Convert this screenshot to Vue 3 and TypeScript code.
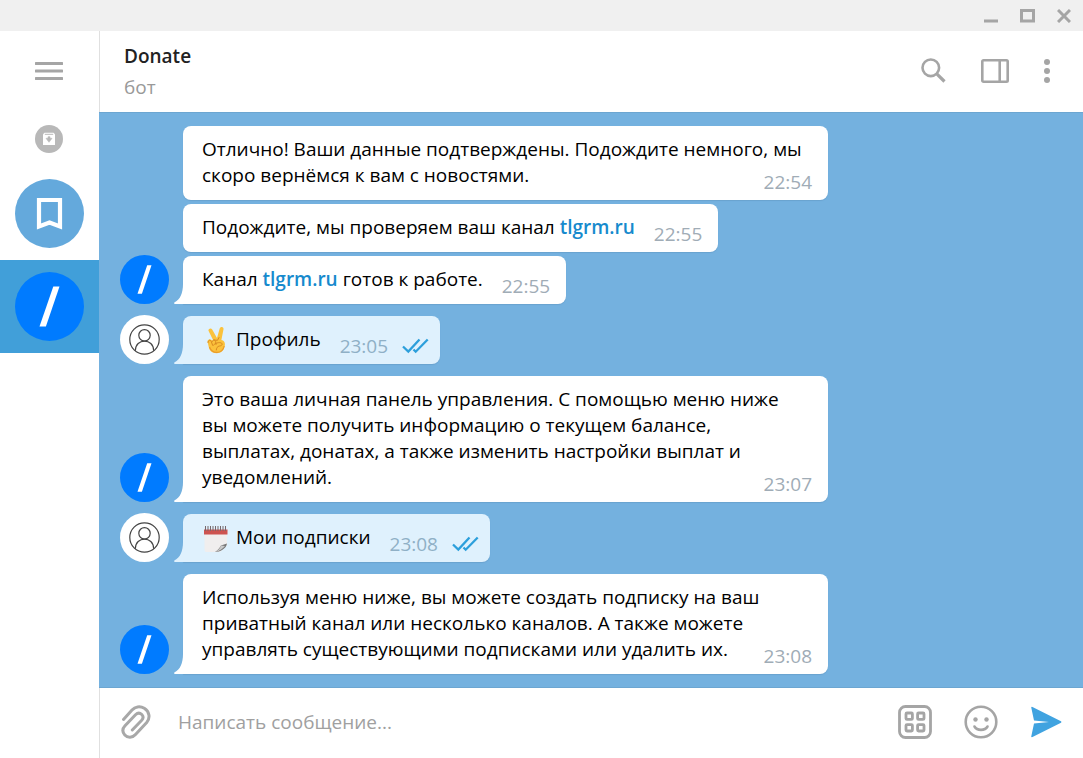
<script setup lang="ts">
import { ref } from 'vue'

type Icon = 'peace' | 'calendar'

interface Part {
  text: string
  link?: boolean
}

interface Message {
  id: number
  from: 'bot' | 'me'
  time: string
  parts: Part[]
  icon?: Icon
  last: boolean
}

const messages: Message[] = [
  {
    id: 1,
    from: 'bot',
    time: '22:54',
    last: false,
    parts: [{ text: 'Отлично! Ваши данные подтверждены. Подождите немного, мы скоро вернёмся к вам с новостями.' }],
  },
  {
    id: 2,
    from: 'bot',
    time: '22:55',
    last: false,
    parts: [{ text: 'Подождите, мы проверяем ваш канал ' }, { text: 'tlgrm.ru', link: true }],
  },
  {
    id: 3,
    from: 'bot',
    time: '22:55',
    last: true,
    parts: [{ text: 'Канал ' }, { text: 'tlgrm.ru', link: true }, { text: ' готов к работе.' }],
  },
  { id: 4, from: 'me', time: '23:05', last: true, icon: 'peace', parts: [{ text: 'Профиль' }] },
  {
    id: 5,
    from: 'bot',
    time: '23:07',
    last: true,
    parts: [
      {
        text: 'Это ваша личная панель управления. С помощью меню ниже вы можете получить информацию о текущем балансе, выплатах, донатах, а также изменить настройки выплат и уведомлений.',
      },
    ],
  },
  { id: 6, from: 'me', time: '23:08', last: true, icon: 'calendar', parts: [{ text: 'Мои подписки' }] },
  {
    id: 7,
    from: 'bot',
    time: '23:08',
    last: true,
    parts: [
      {
        text: 'Используя меню ниже, вы можете создать подписку на ваш приватный канал или несколько каналов. А также можете управлять существующими подписками или удалить их.',
      },
    ],
  },
]

const draft = ref('')
</script>

<template>
  <div class="window">
    <div class="titlebar">
      <button type="button" aria-label="Свернуть">
        <svg width="14" height="14" viewBox="0 0 14 14"><path d="M0 12H14" stroke="#a5a5a5" stroke-width="3" /></svg>
      </button>
      <button type="button" aria-label="Развернуть">
        <svg width="15" height="14" viewBox="0 0 15 14"><rect x="1.5" y="1.5" width="12" height="10.500" fill="none" stroke="#a5a5a5" stroke-width="3" /></svg>
      </button>
      <button type="button" aria-label="Закрыть">
        <svg width="14" height="14" viewBox="0 0 14 14"><path d="M1 1L13 13M13 1L1 13" stroke="#a5a5a5" stroke-width="3" /></svg>
      </button>
    </div>

    <div class="body">
      <nav class="sidebar">
        <button type="button" class="menu" aria-label="Меню">
          <svg width="28" height="18" viewBox="0 0 28 18"><path d="M1 1.500H27M1 9H27M1 16.500H27" stroke="#a5a5a5" stroke-width="3" stroke-linecap="round" /></svg>
        </button>
        <button type="button" class="archive" aria-label="Архив">
          <svg width="28" height="28" viewBox="0 0 28 28">
            <circle cx="14" cy="14" r="14" fill="#b8b8b8" />
            <path d="M9.500 7.800H18.500L20 9.300V20H8V9.300Z" fill="#fff" />
            <path d="M9.800 9.300H18.200" stroke="#b8b8b8" stroke-width="1" />
            <path d="M13 11.700H15V13.300H17L14 17.300L11 13.300H13Z" fill="#b8b8b8" stroke="#b8b8b8" stroke-width=".6" />
          </svg>
        </button>
        <button type="button" class="dialog" aria-label="Избранное">
          <svg width="69" height="69" viewBox="0 0 69 69">
            <circle cx="34.500" cy="34.500" r="34.500" fill="#64a9dc" />
            <path d="M24 21H45V47.500L34.500 43.500L24 47.500Z" fill="none" stroke="#fff" stroke-width="4.200" />
          </svg>
        </button>
        <button type="button" class="dialog active" aria-label="Donate">
          <svg width="69" height="69" viewBox="0 0 69 69">
            <circle cx="34.500" cy="34.500" r="34.500" fill="#007bff" />
            <path d="M38.300 14.500H44.500L30.900 54.500H24.500Z" fill="#fff" />
          </svg>
        </button>
      </nav>

      <main class="chat">
        <header class="header">
          <div class="who">
            <h1>Donate</h1>
            <p>бот</p>
          </div>
          <div class="actions">
            <button type="button" aria-label="Поиск">
              <svg width="25" height="25" viewBox="0 0 25 25" fill="none" stroke="#a5a5a5">
                <circle cx="9.800" cy="9.800" r="8.300" stroke-width="2.600" />
                <path d="M15.800 15.800L23.500 23.500" stroke-width="3.200" />
              </svg>
            </button>
            <button type="button" aria-label="Боковая панель">
              <svg width="28" height="24" viewBox="0 0 28 24" fill="none" stroke="#a5a5a5" stroke-width="2.600">
                <rect x="1.300" y="1.300" width="25.400" height="21.400" rx="1.200" />
                <path d="M18.700 1V23" />
              </svg>
            </button>
            <button type="button" aria-label="Ещё">
              <svg width="6" height="24" viewBox="0 0 6 24" fill="#a5a5a5">
                <circle cx="3" cy="3" r="3" /><circle cx="3" cy="12" r="3" /><circle cx="3" cy="21" r="3" />
              </svg>
            </button>
          </div>
        </header>

        <section class="history">
          <article v-for="m in messages" :key="m.id" class="row" :class="[m.from, { last: m.last }]">
            <div class="avatar">
              <svg v-if="m.last && m.from === 'bot'" width="49" height="49" viewBox="0 0 49 49">
                <circle cx="24.500" cy="24.500" r="24.500" fill="#007bff" />
                <path d="M27.200 10.300H31.500L21.900 38.700H17.500Z" fill="#fff" />
              </svg>
              <svg v-else-if="m.last" width="49" height="49" viewBox="0 0 49 49">
                <circle cx="24.500" cy="24.500" r="24.500" fill="#fff" />
                <g fill="none" stroke="#444" stroke-width="1.200">
                  <circle cx="24.500" cy="24.500" r="14.700" />
                  <circle cx="24.500" cy="20.300" r="5.700" />
                  <path d="M15.300 35.800C15.300 22.800 33.700 22.800 33.700 35.800" />
                </g>
              </svg>
            </div>
            <div class="bubble">
              <svg v-if="m.last" class="tail" width="10" height="20" viewBox="0 0 10 20"><path d="M10 0H9C9 9 6 16 0.300 18.500Q-0.300 20 1 20H10Z" fill="currentColor" /></svg>
              <p>
                <svg v-if="m.icon === 'peace'" class="emoji" width="26" height="28" viewBox="-3 1 26 28">
                  <path d="M8.300 14.500L3.600 5.100C2.700 2.800 6 1.300 7.200 3.500L12 12L14.700 2.500C15.400 0 19 .8 18.500 3.300L16.400 14C19.600 14.700 20.500 17 19.600 20.500C18.600 25 15.700 27.300 11.500 27.200C7 27.100 4.500 25 3.700 20.800L2.600 16C2.200 13.500 5 12.300 6.500 14Z" fill="#fbc23c" />
                  <path d="M3 16.500C3 14 5.500 13.500 6.300 15.500L7.500 19M7.200 15.500C8 13.200 10.300 13.700 10.600 15.500L11 18.500M8 19.500C10 17 14.500 15.800 16.600 17.200C18 18.300 16.700 19.800 14.500 20C12.300 20.300 11.400 22 11.300 24M9 14L12.500 14.300L14 11.500" fill="none" stroke="#d98a22" stroke-width="1" stroke-linecap="round" />
                  <path d="M4.500 21C6 25 9 26.500 12 26.400C16 26.200 18.500 23.500 19.200 20" fill="none" stroke="#e99b2c" stroke-width="1.200" />
                </svg>
                <svg v-else-if="m.icon === 'calendar'" class="emoji" width="26" height="28" viewBox="0 0 26 28">
                  <path d="M2.500 7H25V20.500L18 27H4Q2.500 27 2.500 25Z" fill="#f0eeee" />
                  <path d="M2 4.500H25.500V9.500H2Z" fill="#cd5350" />
                  <path d="M3.500 1V6M6 1V6M8.500 1V6M11 1V6M13.500 1V6M16 1V6M18.500 1V6M21 1V6M23.500 1V6" stroke="#77686b" stroke-width="1" />
                  <path d="M25 18.500C23 19.500 21 19.500 19 20.500C18 22.500 16 25 13 27C18 27 24 24 25 18.500Z" fill="#777" />
                  <path d="M19 20.500C18.500 23 16 25.500 13 27C18 26 21 23.500 23 21Z" fill="#c9c9c9" />
                </svg><template v-for="(part, i) in m.parts" :key="i"><a v-if="part.link" href="#">{{ part.text }}</a><template v-else>{{ part.text }}</template></template><span class="meta"><time>{{ m.time }}</time><svg v-if="m.from === 'me'" width="27" height="16" viewBox="0 0 27 16" fill="none" stroke="#2c9fdb" stroke-width="2.300"><path d="M1 8.500L6.300 13.500L17.500 1.500M11.500 11.500L13.700 13.700L25.700 1.500" /></svg></span>
              </p>
            </div>
          </article>
        </section>

        <form class="composer" @submit.prevent>
          <button type="button" aria-label="Прикрепить файл">
            <svg width="30" height="34" viewBox="0 0 30 34" fill="none" stroke="#a8a8a8" stroke-width="3" stroke-linecap="round" stroke-linejoin="round">
              <path d="M2.500 14.500L11 5C14 1.700 19 .8 23.300 3.200C28.600 6.500 29.500 13 25.700 17.500L14.500 29.500C11.500 33 6.500 33 3.800 30C1.200 27 1.500 23.500 4 20.800L14.500 9.800C16.500 7.800 19 7.800 20.800 9.500C22.500 11.300 22.300 13.500 20.700 15.300L11.300 25" />
            </svg>
          </button>
          <input v-model="draft" type="text" aria-label="Сообщение" placeholder="Написать сообщение..." />
          <div class="tools">
            <button type="button" aria-label="Клавиатура бота">
              <svg width="34" height="34" viewBox="0 0 34 34" fill="none" stroke="#a5a5a5" stroke-width="2.800">
                <rect x="1.500" y="1.500" width="31" height="31" rx="6" />
                <rect x="8" y="8" width="6.400" height="6.400" rx="1" /><rect x="19.600" y="8" width="6.400" height="6.400" rx="1" />
                <rect x="8" y="19.600" width="6.400" height="6.400" rx="1" /><rect x="19.600" y="19.600" width="6.400" height="6.400" rx="1" />
              </svg>
            </button>
            <button type="button" aria-label="Эмодзи">
              <svg width="34" height="34" viewBox="0 0 34 34" fill="none" stroke="#a5a5a5" stroke-width="2.600">
                <circle cx="17" cy="17" r="15.300" />
                <path d="M10.500 21.500C13 26 21 26 23.500 21.500" stroke-linecap="round" />
                <g fill="#a5a5a5" stroke="none"><circle cx="11.500" cy="14.500" r="2.200" /><circle cx="22.500" cy="14.500" r="2.200" /></g>
              </svg>
            </button>
            <button type="submit" aria-label="Отправить">
              <svg width="32" height="32" viewBox="0 0 32 32"><path d="M1.200 1.200Q1.500 .5 2.500 .9L31 15.300Q32 16 31 16.700L2.500 31.100Q1.500 31.500 1.200 30.800L4 17.400L19 16L4 14.600Z" fill="#40a3e0" /></svg>
            </button>
          </div>
        </form>
      </main>
    </div>
  </div>
</template>

<style>
body {
  margin: 0;
}
</style>

<style scoped>
.window {
  display: flex;
  flex-direction: column;
  min-height: 100vh;
  background: #fff;
  color: #000;
  font: 19px/26px "Open Sans", "Noto Sans", sans-serif;
}

button {
  display: flex;
  align-items: center;
  justify-content: center;
  padding: 0;
  border: 0;
  background: none;
  cursor: pointer;
}

svg {
  display: block;
  flex: none;
}

.titlebar {
  display: flex;
  align-items: center;
  justify-content: flex-end;
  gap: 22px;
  height: 31px;
  padding-right: 12px;
  background: #f0f0f0;
}

.body {
  display: flex;
  flex: 1;
}

.sidebar {
  display: flex;
  flex: none;
  flex-direction: column;
  width: 99px;
}

.menu,
.archive {
  padding-right: 2px;
}

.menu {
  height: 80px;
}

.archive {
  height: 56px;
}

.dialog {
  height: 93px;
}

.dialog.active {
  background: #419fd9;
}

.chat {
  display: flex;
  flex: 1;
  flex-direction: column;
  min-width: 0;
}

.header {
  display: flex;
  align-items: center;
  justify-content: space-between;
  box-sizing: border-box;
  height: 81px;
  padding: 0 33px 0 24px;
  border-left: 1px solid #e0e0e0;
}

.who h1,
.who p {
  margin: 0;
  font-size: 19px;
  line-height: 31px;
}

.who h1 {
  font-weight: 600;
  color: #222;
}

.who p {
  color: #999;
}

.actions {
  display: flex;
  align-items: center;
  gap: 35px;
  padding-bottom: 2px;
}

.history {
  display: flex;
  flex: 1;
  flex-direction: column;
  justify-content: flex-end;
  padding: 14px 21px;
  background: #74b1df;
  box-shadow: inset 0 1px #6ca6d1, inset 0 -1px #6ca6d1;
}

.row {
  display: flex;
  align-items: flex-end;
  gap: 14px;
  margin-bottom: 4px;
}

.row.last {
  margin-bottom: 12px;
}

.row:last-child {
  margin-bottom: 0;
}

.avatar {
  flex: none;
  width: 49px;
  margin-top: -1px;
}

.bubble {
  position: relative;
  max-width: 602px;
  padding: 10px 24px 12px 19px;
  border-radius: 8px;
  background: #fff;
  color: #fff;
  box-shadow: 0 1px 1px #6aa3cf;
}

.last .bubble {
  border-bottom-left-radius: 0;
}

.me .bubble {
  padding-right: 19px;
  background: #dff1fd;
  color: #dff1fd;
}

.bubble p {
  margin: 0;
  color: #000;
}

.tail {
  position: absolute;
  bottom: 0;
  left: -9px;
}

.bubble a {
  color: #168acd;
  font-weight: 600;
  text-decoration: none;
}

.emoji {
  display: inline-block;
  margin: -6px 8px -6px 0;
  vertical-align: middle;
}

.meta {
  display: flex;
  float: right;
  align-items: center;
  gap: 14px;
  margin: 7px -8px -7px 19px;
  color: #a0acb6;
}

.me .meta {
  color: #8fb0c6;
}

.composer {
  display: flex;
  align-items: center;
  box-sizing: border-box;
  height: 70px;
  padding: 0 21px 2px;
  border-left: 1px solid #e0e0e0;
}

.composer input {
  flex: 1;
  min-width: 0;
  padding: 0;
  margin: 0 27px;
  border: 0;
  outline: 0;
  background: none;
  color: #000;
  font: inherit;
}

.composer input::placeholder {
  color: #a0a0a0;
  opacity: 1;
}

.tools {
  display: flex;
  align-items: center;
  gap: 32px;
}
</style>
